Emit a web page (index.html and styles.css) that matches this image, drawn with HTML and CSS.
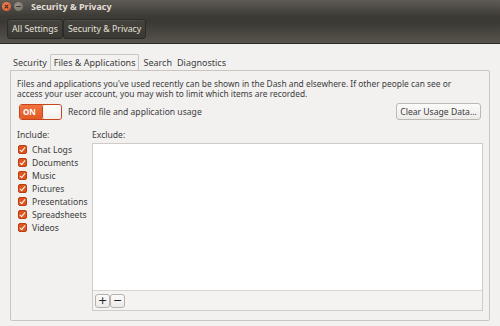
FILE: index.html
```html
<!DOCTYPE html>
<html lang="en">
<head>
  <meta charset="UTF-8">
  <title>Security &amp; Privacy</title>
  <link rel="stylesheet" href="styles.css">
</head>
<body>
  <div class="window">
    <header class="titlebar">
      <div class="title-row">
        <span class="wbtn close"><svg viewBox="0 0 10 10" width="9" height="9"><path d="M3 3 L7 7 M7 3 L3 7" stroke="#3a2a22" stroke-width="1.2"/></svg></span>
        <span class="wbtn min"><svg viewBox="0 0 10 10" width="9" height="9"><path d="M2.5 5 H7.5" stroke="#3a3935" stroke-width="1.2"/></svg></span>
        <span class="title">Security &amp; Privacy</span>
      </div>
      <div class="toolbar">
        <button class="tb-btn">All Settings</button>
        <button class="tb-btn">Security &amp; Privacy</button>
      </div>
    </header>

    <main class="content">
      <div class="tabs">
        <span class="tab">Security</span>
        <span class="tab active">Files &amp; Applications</span>
        <span class="tab">Search</span>
        <span class="tab">Diagnostics</span>
      </div>

      <div class="notebook">
        <p class="intro">Files and applications you've used recently can be shown in the Dash and elsewhere. If other people can see or access your user account, you may wish to limit which items are recorded.</p>

        <div class="usage-row">
          <span class="switch"><span class="on">ON</span><span class="knob"></span></span>
          <span class="usage-label">Record file and application usage</span>
          <button class="btn clear">Clear Usage Data…</button>
        </div>

        <div class="lists">
          <div class="include">
            <div class="heading">Include:</div>
            <ul class="checks">
              <li><span class="check"></span>Chat Logs</li>
              <li><span class="check"></span>Documents</li>
              <li><span class="check"></span>Music</li>
              <li><span class="check"></span>Pictures</li>
              <li><span class="check"></span>Presentations</li>
              <li><span class="check"></span>Spreadsheets</li>
              <li><span class="check"></span>Videos</li>
            </ul>
          </div>
          <div class="exclude">
            <div class="heading">Exclude:</div>
            <div class="list-box">
              <div class="list-area"></div>
              <div class="list-tools">
                <button class="small-btn">+</button><button class="small-btn">−</button>
              </div>
            </div>
          </div>
        </div>
      </div>
    </main>
  </div>
</body>
</html>
```

FILE: styles.css
```css
body {
  margin: 0;
  font-family: "Noto Sans", "DejaVu Sans", sans-serif;
  font-size: 8.6px;
  background-color: #f2f1f0;
  color: #3c3c3c;
}
.window {
  width: 500px;
  height: 326px;
  overflow: hidden;
}
.titlebar {
  background: linear-gradient(#5f5b55 0px, #3d3b36 16px, #3b3934 22px, #57534c 43px);
  border-bottom: 1px solid #2b2a27;
  height: 43px;
}
.title-row {
  height: 13px;
  display: flex;
  align-items: center;
  padding: 0 0 0 2px;
}
.wbtn {
  width: 9px;
  height: 9px;
  border-radius: 50%;
  margin-right: 3px;
  display: flex;
}
.close {
  background: radial-gradient(circle at 40% 35%, #f7875a, #e0521d);
}
.min {
  background: radial-gradient(circle at 40% 35%, #9a968e, #6c6962);
}
.title {
  margin-left: 5px;
  color: #e3dfd8;
  font-weight: bold;
  font-size: 9px;
}
.toolbar {
  display: flex;
  padding: 6px 7px 0;
}
.tb-btn {
  font-family: inherit;
  font-size: 8.8px;
  color: #e6e2da;
  background: linear-gradient(#46433e, #3b3934);
  border: 1px solid #2c2b28;
  border-radius: 3px;
  height: 20px;
  padding: 0 4px;
  margin-right: 0;
  box-shadow: inset 0 1px 0 rgba(255, 255, 255, 0.06);
}
.content {
  padding: 11px 10px 0;
}
.tabs {
  display: flex;
  align-items: flex-end;
  height: 15px;
  padding-left: 1px;
  position: relative;
  z-index: 1;
  font-size: 9px;
}
.tab {
  padding: 0 2px;
  margin-right: 1px;
  height: 14px;
  line-height: 13px;
}
.tab.active {
  height: 15px;
  background-color: #f2f1f0;
  border: 1px solid #c9c6c1;
  border-bottom: none;
  border-radius: 2px 2px 0 0;
  padding: 0 3px;
  margin-right: 2px;
  line-height: 15px;
}
.notebook {
  border: 1px solid #c9c6c1;
  border-radius: 0 2px 2px 2px;
  height: 251px;
  box-sizing: border-box;
  padding: 0 6px;
}
.intro {
  margin: 8px 0 0;
  max-width: 450px;
  font-size: 8.4px;
  line-height: 10px;
}
.usage-row {
  display: flex;
  align-items: center;
  margin-top: 4px;
  height: 17px;
}
.switch {
  display: flex;
  width: 43px;
  height: 16px;
  margin-left: 2px;
  border: 1px solid #c8441a;
  border-radius: 3px;
  box-sizing: border-box;
  overflow: hidden;
}
.switch .on {
  width: 22px;
  background: linear-gradient(#f0733f, #e25a26);
  color: white;
  font-size: 8px;
  font-weight: bold;
  line-height: 14px;
  padding-left: 3px;
  box-sizing: border-box;
}
.switch .knob {
  flex: 1;
  background: linear-gradient(#ffffff, #f1f0ee);
  border-left: 1px solid #c8441a;
  border-radius: 2px;
}
.usage-label {
  margin-left: 6px;
}
.btn {
  font-family: inherit;
  font-size: 8.6px;
  color: #3c3c3c;
  background: linear-gradient(#fbfbfa, #ecebe9);
  border: 1px solid #bcb9b4;
  border-radius: 3px;
  white-space: nowrap;
}
.clear {
  margin-left: auto;
  margin-right: 2px;
  height: 17px;
  width: 85px;
  padding: 0;
}
.lists {
  display: flex;
  margin-top: 9px;
}
.heading {
  height: 14px;
}
.include {
  width: 75px;
}
.checks {
  list-style: none;
  margin: 0;
  padding: 0;
}
.checks li {
  display: flex;
  align-items: center;
  height: 13px;
  margin-left: 1px;
}
.check {
  width: 9px;
  height: 9px;
  box-sizing: border-box;
  border: 1px solid #b8400f;
  border-radius: 2px;
  background: #e0541e;
  margin-right: 5px;
  position: relative;
}
.check::after {
  content: "";
  position: absolute;
  left: 2px;
  top: 0;
  width: 2px;
  height: 5px;
  border: solid white;
  border-width: 0 1.5px 1.5px 0;
  transform: rotate(40deg);
}
.exclude {
  flex: 1;
}
.list-box {
  border: 1px solid #cfccc7;
  height: 168px;
  box-sizing: border-box;
  display: flex;
  flex-direction: column;
}
.list-area {
  flex: 1;
  background: white;
  border-bottom: 1px solid #d9d6d1;
}
.list-tools {
  height: 19px;
  display: flex;
  align-items: center;
  padding-left: 2px;
  background: #f4f3f2;
}
.small-btn {
  width: 15px;
  height: 14px;
  padding: 0;
  font-size: 11px;
  line-height: 12px;
  color: #222;
  background: linear-gradient(#fbfbfa, #ebeae8);
  border: 1px solid #b5b2ad;
  border-radius: 3px;
  font-family: "DejaVu Sans", sans-serif;
}
```
